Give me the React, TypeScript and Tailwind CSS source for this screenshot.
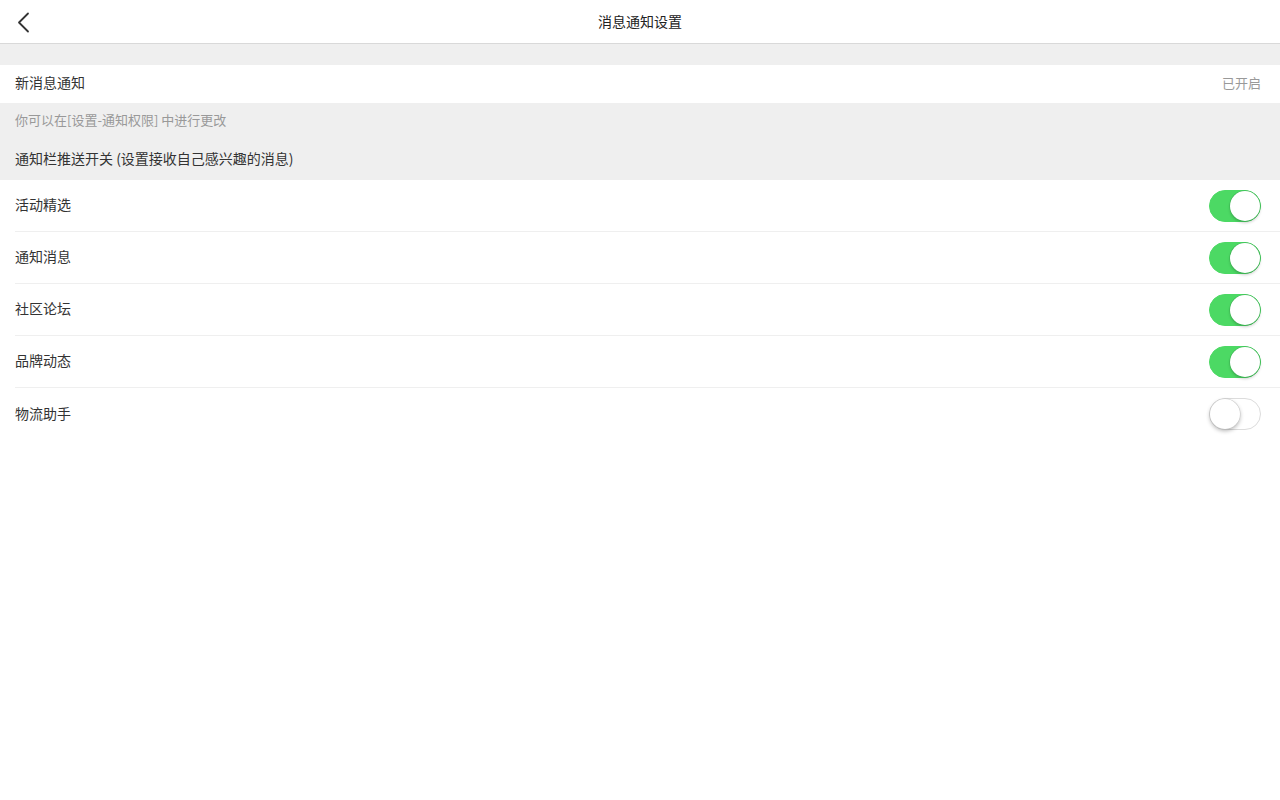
import { useState } from 'react';

type Item = { id: string; label: string; on: boolean };

const initialItems: Item[] = [
  { id: 'activity', label: '活动精选', on: true },
  { id: 'notice', label: '通知消息', on: true },
  { id: 'forum', label: '社区论坛', on: true },
  { id: 'brand', label: '品牌动态', on: true },
  { id: 'logistics', label: '物流助手', on: false },
];

function Toggle({ on, onChange }: { on: boolean; onChange: () => void }) {
  return (
    <button
      type="button"
      onClick={onChange}
      className={`relative h-[32px] w-[52px] rounded-full border transition-colors ${
        on ? 'bg-[#4cd964] border-[#4cd964]' : 'bg-white border-[#dcdcdc]'
      }`}
    >
      <span
        className={`absolute top-[0px] h-[30px] w-[30px] rounded-full bg-white ${
          on
            ? 'left-[20px] shadow-[0_0_0_0.5px_#3cb052,0_2px_3px_rgba(0,0,0,0.2)]'
            : 'left-[0px] shadow-[0_0_0_0.5px_#c8c8c8,0_2px_4px_rgba(0,0,0,0.3)]'
        }`}
      />
    </button>
  );
}

function App() {
  const [items, setItems] = useState(initialItems);

  const toggle = (id: string) => {
    setItems((prev) => prev.map((item) => (item.id === id ? { ...item, on: !item.on } : item)));
  };

  return (
    <div className="min-h-[800px] bg-white text-[14px] text-[#333] font-['Noto_Sans_CJK_SC','Noto_Sans',sans-serif]">
      <header className="relative flex h-[44px] items-center justify-center border-b border-[#d9d9d9] bg-white pb-[2px]">
        <button type="button" className="absolute left-[14px] top-[10px] p-[2px]">
          <svg width="16" height="22" viewBox="0 0 16 22" fill="none">
            <path d="M12 1.5 L3 10.5 L12 19.5" stroke="#333" strokeWidth="1.8" strokeLinecap="round" strokeLinejoin="round" />
          </svg>
        </button>
        <h1 className="text-[14px] leading-none text-[#222]">消息通知设置</h1>
      </header>

      <div className="h-[21px] bg-[#efefef]" />

      <div className="flex h-[38px] items-center justify-between bg-white pl-[15px] pr-[19px] pb-[3px]">
        <span>新消息通知</span>
        <span className="text-[13px] text-[#999]">已开启</span>
      </div>

      <div className="bg-[#efefef] px-[15px]">
        <p className="flex h-[35px] items-center pb-[2px] text-[13px] text-[#999]">你可以在[设置-通知权限] 中进行更改</p>
        <p className="flex h-[42px] items-center pb-[2px]">通知栏推送开关 (设置接收自己感兴趣的消息)</p>
      </div>

      <ul className="pl-[15px]">
        {items.map((item, index) => (
          <li
            key={item.id}
            className={`flex h-[52px] items-center justify-between pr-[19px] ${
              index < items.length - 1 ? 'border-b border-[#efefef]' : ''
            }`}
          >
            <span className="pb-[2px]">{item.label}</span>
            <Toggle on={item.on} onChange={() => toggle(item.id)} />
          </li>
        ))}
      </ul>
    </div>
  );
}

export default App;
